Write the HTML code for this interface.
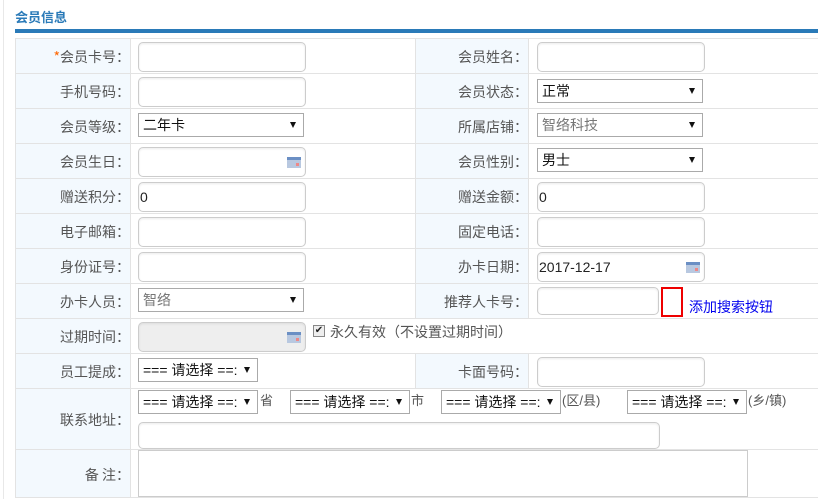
<!DOCTYPE html><html><head><meta charset="utf-8"><style>
*{box-sizing:border-box;margin:0;padding:0}
body{width:818px;height:499px;background:#fff;font-family:"Liberation Sans","Noto Sans CJK SC",sans-serif;font-size:13px;color:#555;position:relative;overflow:hidden;line-height:16px}
.a{position:absolute}
.cj{font-family:"Noto Sans CJK SC",sans-serif}
.lb{position:absolute;background:#f3f9fe}
.L,.R{position:absolute;height:35px;line-height:35px;padding-top:2px;text-align:right;font-size:14px;font-family:"Noto Sans CJK SC",sans-serif}
.L{left:15px;width:115px}.R{left:415px;width:113px}
.hl{position:absolute;left:15px;right:0;height:1px;background:#e3e3e3}
.vl{position:absolute;width:1px;background:#e3e3e3}
.in{position:absolute;height:30px;width:168px;border:1px solid #ccc;border-radius:5px;background:#fff;box-shadow:inset 0 1px 2px rgba(0,0,0,.08);font-size:14px;color:#222;padding-left:1px;line-height:28px}
.sel{position:absolute;height:24px;border:1px solid #aaa;background:#fff;color:#111;font-size:14px;line-height:22px;padding-left:4px;white-space:nowrap;overflow:hidden}
.sel:after{content:"";position:absolute;right:7px;top:8px;border-left:3.5px solid transparent;border-right:3.5px solid transparent;border-top:6px solid #111}
.cal{position:absolute;right:4px;top:9px;width:14px;height:11px;background:#b8c8e0;border-top:3px solid #6b8fc4}
.cal:after{content:"";position:absolute;right:2px;top:3px;width:3px;height:3px;background:#e88}
.t{position:absolute;font-size:13px;line-height:16px}
</style></head><body>
<div class="a" style="left:3px;top:0;width:1px;height:499px;background:#e8e8e8"></div>
<div class="a" style="left:15px;top:10px;font-size:13px;font-weight:bold;color:#2a7ab8">会员信息</div>
<div class="a" style="left:15px;top:29px;right:0;height:4px;background:#2a7ab8"></div>
<div class="lb" style="left:15px;top:38px;width:115px;height:459px"></div>
<div class="lb" style="left:415px;top:38px;width:113px;height:280px"></div>
<div class="lb" style="left:415px;top:353px;width:113px;height:35px"></div>
<div class="hl" style="top:38px"></div><div class="hl" style="top:73px"></div><div class="hl" style="top:108px"></div><div class="hl" style="top:143px"></div><div class="hl" style="top:178px"></div><div class="hl" style="top:213px"></div><div class="hl" style="top:248px"></div><div class="hl" style="top:283px"></div><div class="hl" style="top:318px"></div><div class="hl" style="top:353px"></div><div class="hl" style="top:388px"></div><div class="hl" style="top:449px"></div><div class="hl" style="top:497px"></div>
<div class="vl" style="left:15px;top:38px;height:459px"></div>
<div class="vl" style="left:130px;top:38px;height:459px"></div>
<div class="vl" style="left:415px;top:38px;height:280px"></div>
<div class="vl" style="left:528px;top:38px;height:280px"></div>
<div class="vl" style="left:415px;top:353px;height:35px"></div>
<div class="vl" style="left:528px;top:353px;height:35px"></div>
<div class="L" style="top:38px"><span style="color:#f60">*</span>会员卡号：</div>
<div class="L" style="top:73px">手机号码：</div>
<div class="L" style="top:108px">会员等级：</div>
<div class="L" style="top:143px">会员生日：</div>
<div class="L" style="top:178px">赠送积分：</div>
<div class="L" style="top:213px">电子邮箱：</div>
<div class="L" style="top:248px">身份证号：</div>
<div class="L" style="top:283px">办卡人员：</div>
<div class="L" style="top:318px">过期时间：</div>
<div class="L" style="top:353px">员工提成：</div>
<div class="L" style="top:401px">联系地址：</div>
<div class="L" style="top:456px">备 注：</div>
<div class="R" style="top:38px">会员姓名：</div>
<div class="R" style="top:73px">会员状态：</div>
<div class="R" style="top:108px">所属店铺：</div>
<div class="R" style="top:143px">会员性别：</div>
<div class="R" style="top:178px">赠送金额：</div>
<div class="R" style="top:213px">固定电话：</div>
<div class="R" style="top:248px">办卡日期：</div>
<div class="R" style="top:283px">推荐人卡号：</div>
<div class="R" style="top:353px">卡面号码：</div>
<div class="in" style="left:138px;top:42px"></div>
<div class="in" style="left:138px;top:77px"></div>
<div class="sel" style="left:138px;top:113px;width:166px">二年卡</div>
<div class="in" style="left:138px;top:147px"><span class="cal"></span></div>
<div class="in" style="left:138px;top:182px">0</div>
<div class="in" style="left:138px;top:217px"></div>
<div class="in" style="left:138px;top:252px"></div>
<div class="sel" style="left:138px;top:288px;width:166px;color:#777">智络</div>
<div class="in" style="left:138px;top:322px;background:#eee"><span class="cal"></span></div>
<div class="a" style="left:313px;top:325px;width:12px;height:12px;border:1px solid #888;background:#eee;font-size:10px;line-height:10px;text-align:center;color:#222">✔</div>
<div class="t cj" style="left:330px;top:324px;font-size:14px">永久有效（不设置过期时间）</div>
<div class="sel" style="left:138px;top:358px;width:120px">=== 请选择 ==:</div>
<div class="in" style="left:537px;top:42px"></div>
<div class="sel" style="left:537px;top:79px;width:166px">正常</div>
<div class="sel" style="left:537px;top:113px;width:166px;color:#777">智络科技</div>
<div class="sel" style="left:537px;top:148px;width:166px">男士</div>
<div class="in" style="left:537px;top:182px">0</div>
<div class="in" style="left:537px;top:217px"></div>
<div class="in" style="left:537px;top:252px">2017-12-17<span class="cal"></span></div>
<div class="in" style="left:537px;top:287px;width:122px;height:28px"></div>
<div class="a" style="left:661px;top:287px;width:22px;height:30px;border:2px solid #e00"></div>
<div class="t" style="left:689px;top:299px;color:#00e;font-size:14px">添加搜索按钮</div>
<div class="in" style="left:537px;top:357px"></div>
<div class="sel" style="left:138px;top:390px;width:120px">=== 请选择 ==:</div><div class="t" style="left:260px;top:393px">省</div>
<div class="sel" style="left:290px;top:390px;width:120px">=== 请选择 ==:</div><div class="t" style="left:411px;top:393px">市</div>
<div class="sel" style="left:441px;top:390px;width:120px">=== 请选择 ==:</div><div class="t" style="left:562px;top:393px">(区/县)</div>
<div class="sel" style="left:627px;top:390px;width:120px">=== 请选择 ==:</div><div class="t" style="left:748px;top:393px">(乡/镇)</div>
<div class="in" style="left:138px;top:422px;width:522px;height:27px"></div>
<div class="a" style="left:138px;top:450px;width:610px;height:47px;border:1px solid #ccc"></div>
</body></html>
